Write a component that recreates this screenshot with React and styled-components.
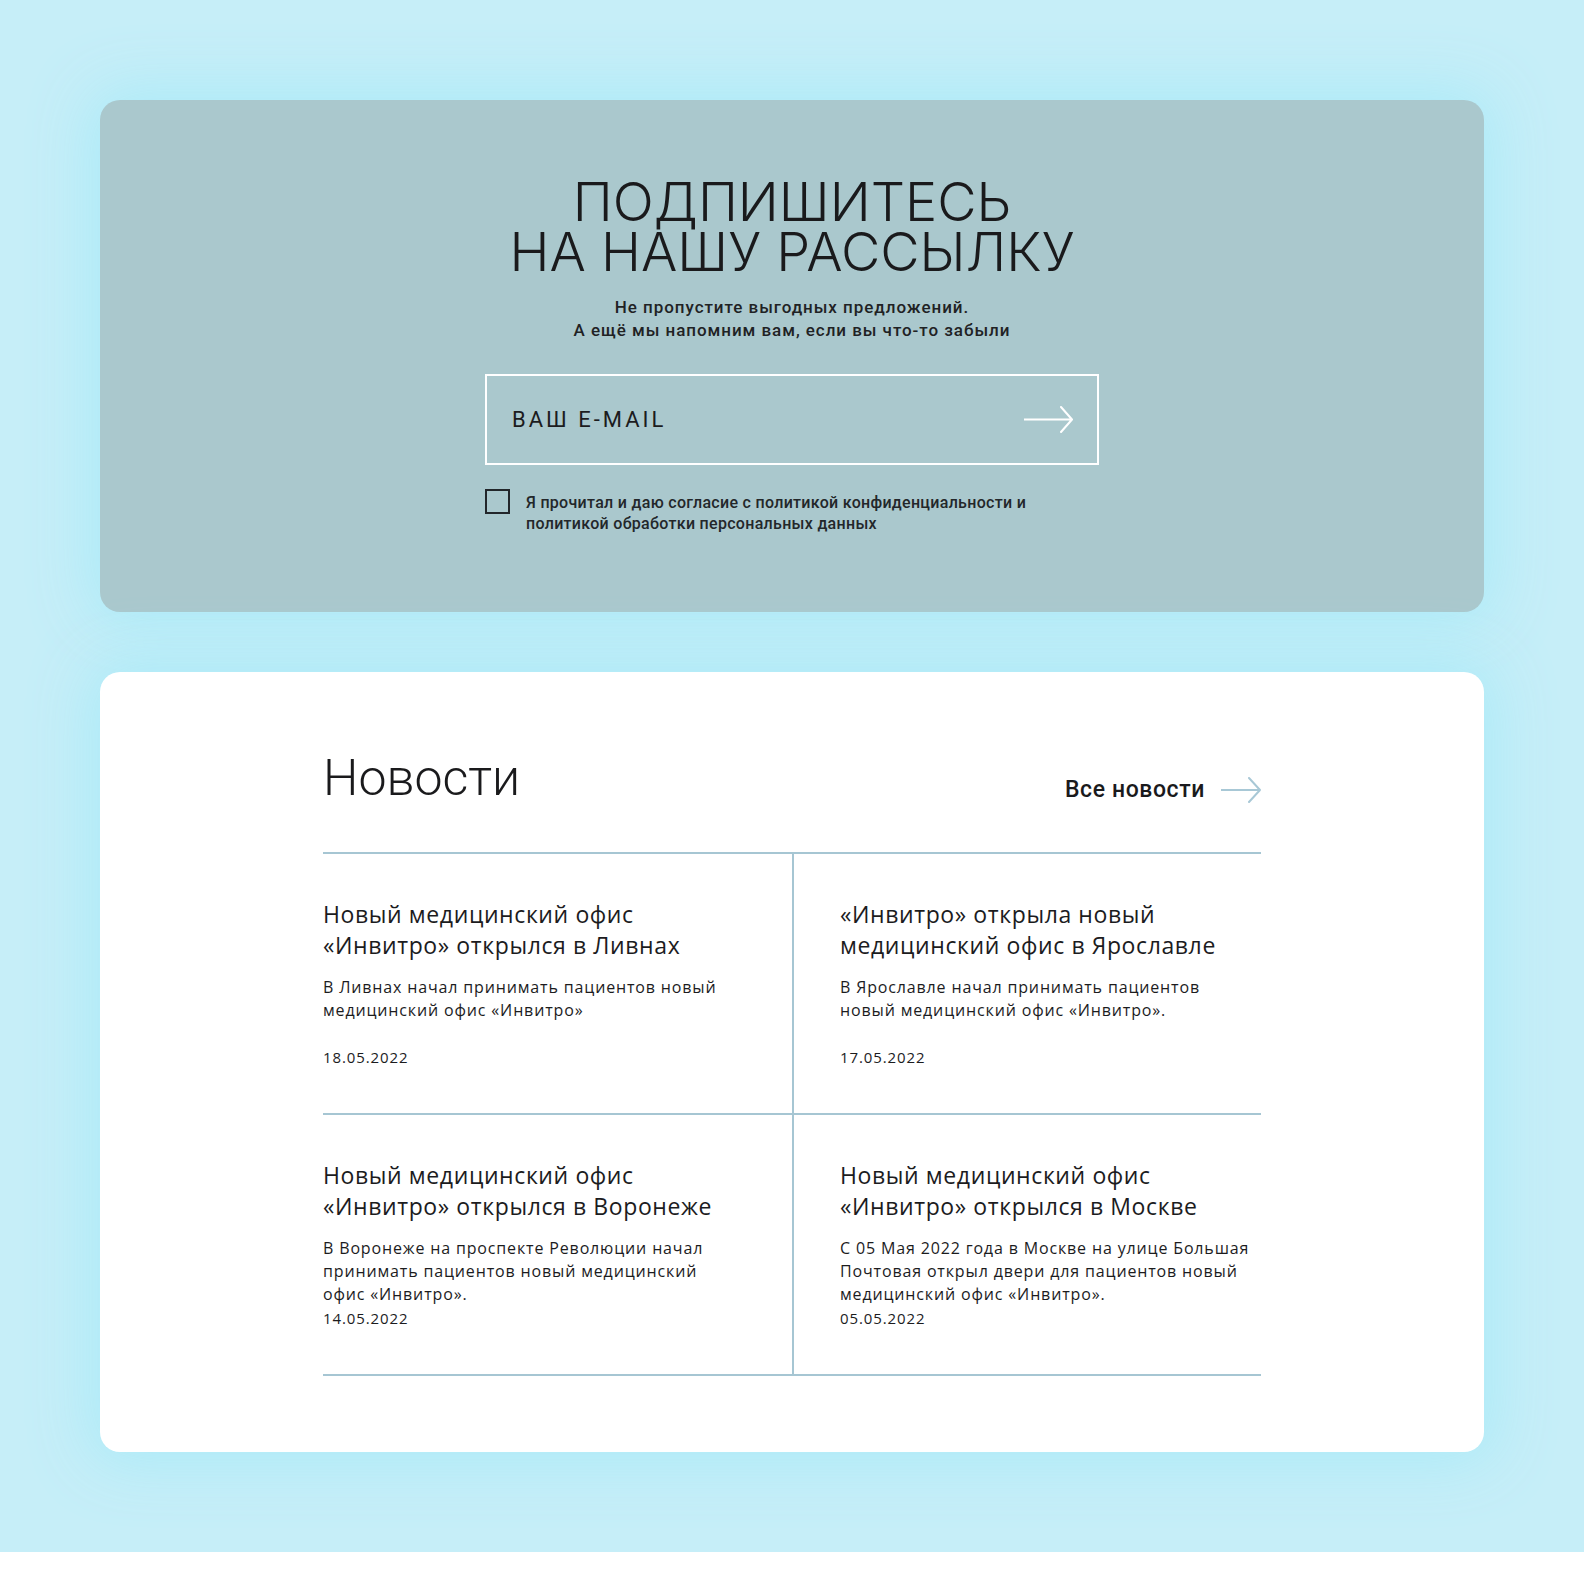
import React from "react";
import styled, { createGlobalStyle } from "styled-components";

const GlobalStyle = createGlobalStyle`
  * { box-sizing: border-box; }
  html, body { margin: 0; padding: 0; background: #ffffff; }
  body { font-family: "Open Sans", "Noto Sans", sans-serif; color: #1c1c1e; }
`;

const Page = styled.div`
  background: #c6eef8;
  padding: 100px;
  display: flex;
  flex-direction: column;
  gap: 60px;
`;

const Card = styled.section`
  border-radius: 20px;
  background: ${(p) => (p.$tone === "muted" ? "#aac8cd" : "#ffffff")};
  box-shadow: 0 0 60px 10px rgba(168, 234, 247, 0.9);
`;

const SubscribeCard = styled(Card)`
  padding: 77px 0 78px;
  display: flex;
  flex-direction: column;
  align-items: center;
`;

const Heading = styled.h2`
  margin: 0;
  font-family: "Inter", sans-serif;
  font-weight: 300;
  font-size: 54px;
  line-height: 50px;
  letter-spacing: 0;
  text-align: center;
  text-transform: uppercase;
  color: #1a1a1c;
`;

const Lead = styled.p`
  margin: 19px 0 0;
  font-family: "Roboto", sans-serif;
  font-weight: 500;
  font-size: 17px;
  line-height: 23px;
  letter-spacing: 0.95px;
  text-align: center;
  color: #1f2224;
`;

const EmailField = styled.label`
  margin-top: 32px;
  width: 614px;
  height: 91px;
  border: 2px solid #ffffff;
  display: flex;
  align-items: center;
  justify-content: space-between;
  padding: 0 24px 0 23px;
`;

const EmailInput = styled.input`
  flex: 1;
  border: 0;
  outline: none;
  background: transparent;
  font-family: "Roboto", sans-serif;
  font-size: 22px;
  letter-spacing: 3px;
  color: #1c1c1e;
  &::placeholder {
    color: #1c1c1e;
    opacity: 1;
  }
`;

const SendButton = styled.button`
  border: 0;
  background: transparent;
  padding: 0;
  display: flex;
  cursor: pointer;
`;

const Consent = styled.div`
  margin-top: 24px;
  width: 614px;
  display: flex;
  align-items: flex-start;
  gap: 16px;
`;

const Box = styled.span`
  flex: none;
  width: 25px;
  height: 25px;
  border: 2px solid #22262a;
`;

const ConsentText = styled.p`
  margin: 3px 0 0;
  font-family: "Roboto", sans-serif;
  font-weight: 500;
  font-size: 16px;
  line-height: 21px;
  letter-spacing: 0.3px;
  white-space: nowrap;
  color: #23272a;
`;

const NewsCard = styled(Card)`
  padding: 78px 223px 76px;
`;

const NewsHeader = styled.div`
  display: flex;
  justify-content: space-between;
  align-items: flex-end;
`;

const NewsTitle = styled.h2`
  margin: 0;
  font-family: "Roboto", sans-serif;
  font-weight: 300;
  font-size: 50px;
  line-height: 56px;
  color: #1a1a1c;
`;

const AllLink = styled.a`
  display: flex;
  align-items: center;
  gap: 16px;
  margin-bottom: 2px;
  font-family: "Roboto", sans-serif;
  font-weight: 500;
  font-size: 23px;
  line-height: 28px;
  letter-spacing: 0.6px;
  color: #1a1a1c;
  text-decoration: none;
`;

const Grid = styled.div`
  margin-top: 46px;
  display: grid;
  grid-template-columns: 1fr 1fr;
  border-bottom: 2px solid #a6c6d3;
`;

const Item = styled.article`
  border-top: 2px solid #a6c6d3;
  padding: ${(p) => (p.$side === "left" ? "45px 46px 46px 0" : "45px 0 46px 46px")};
  border-left: ${(p) => (p.$side === "right" ? "2px solid #a6c6d3" : "0")};
  display: flex;
  flex-direction: column;
`;

const ItemTitle = styled.h3`
  margin: 0;
  font-family: "Open Sans", sans-serif;
  font-weight: 500;
  font-size: 23px;
  line-height: 31px;
  letter-spacing: 0.6px;
  color: #1c1c1e;
`;

const ItemText = styled.p`
  margin: 15px 0 0;
  max-width: 413px;
  min-height: 69px;
  font-family: "Open Sans", sans-serif;
  font-weight: 500;
  font-size: 16px;
  line-height: 23px;
  letter-spacing: 0.85px;
  color: #1c1c1e;
`;

const ItemDate = styled.time`
  margin-top: 2px;
  font-family: "Open Sans", sans-serif;
  font-weight: 500;
  font-size: 15px;
  line-height: 20px;
  letter-spacing: 0.9px;
  color: #1c1c1e;
`;

const Arrow = ({ width, height, color, stroke }) => (
  <svg width={width} height={height} viewBox={`0 0 ${width} ${height}`} fill="none">
    <path
      d={`M0 ${height / 2} H${width - 1} M${width - 12} 1 L${width - 1} ${height / 2} L${width - 12} ${height - 1}`}
      stroke={color}
      strokeWidth={stroke}
      strokeLinecap="round"
      strokeLinejoin="round"
    />
  </svg>
);

const news = [
  {
    title: "Новый медицинский офис «Инвитро» открылся в Ливнах",
    text: "В Ливнах начал принимать пациентов новый медицинский офис «Инвитро»",
    date: "18.05.2022",
  },
  {
    title: "«Инвитро» открыла новый медицинский офис в Ярославле",
    text: "В Ярославле начал принимать пациентов новый медицинский офис «Инвитро».",
    date: "17.05.2022",
  },
  {
    title: "Новый медицинский офис «Инвитро» открылся в Воронеже",
    text: "В Воронеже на проспекте Революции начал принимать пациентов новый медицинский офис «Инвитро».",
    date: "14.05.2022",
  },
  {
    title: "Новый медицинский офис «Инвитро» открылся в Москве",
    text: "С 05 Мая 2022 года в Москве на улице Большая Почтовая открыл двери для пациентов новый медицинский офис «Инвитро».",
    date: "05.05.2022",
  },
];

export default function App() {
  return (
    <>
      <GlobalStyle />
      <Page>
        <SubscribeCard $tone="muted">
          <Heading>
            Подпишитесь
            <br />
            на нашу рассылку
          </Heading>
          <Lead>
            Не пропустите выгодных предложений.
            <br />
            А ещё мы напомним вам, если вы что-то забыли
          </Lead>
          <EmailField>
            <EmailInput type="email" placeholder="ВАШ E-MAIL" />
            <SendButton type="button" aria-label="Подписаться">
              <Arrow width={49} height={27} color="#ffffff" stroke={2} />
            </SendButton>
          </EmailField>
          <Consent>
            <Box />
            <ConsentText>
              Я прочитал и даю согласие с политикой конфиденциальности и
              <br />
              политикой обработки персональных данных
            </ConsentText>
          </Consent>
        </SubscribeCard>

        <NewsCard>
          <NewsHeader>
            <NewsTitle>Новости</NewsTitle>
            <AllLink href="#">
              Все новости
              <Arrow width={40} height={26} color="#a8c8d6" stroke={2} />
            </AllLink>
          </NewsHeader>
          <Grid>
            {news.map((n, i) => (
              <Item key={n.date} $side={i % 2 === 0 ? "left" : "right"}>
                <ItemTitle>{n.title}</ItemTitle>
                <ItemText>{n.text}</ItemText>
                <ItemDate>{n.date}</ItemDate>
              </Item>
            ))}
          </Grid>
        </NewsCard>
      </Page>
    </>
  );
}
